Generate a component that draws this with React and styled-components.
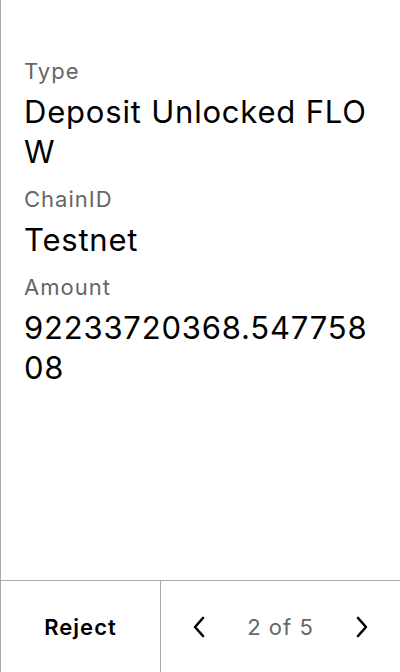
import React from "react";
import styled, { createGlobalStyle } from "styled-components";

const GlobalStyle = createGlobalStyle`
  html, body {
    margin: 0;
    padding: 0;
    background: #fff;
  }
  body {
    font-family: Inter, "Noto Sans", sans-serif;
  }
`;

const fields = [
  { label: "Type", value: "Deposit Unlocked FLOW" },
  { label: "ChainID", value: "Testnet" },
  { label: "Amount", value: "92233720368.54775808" },
];

function Chevron({ dir }) {
  const d = dir === "left" ? "M10 2 L2 11 L10 20" : "M2 2 L10 11 L2 20";
  return (
    <svg width="12" height="22" viewBox="0 0 12 22" fill="none">
      <path d={d} stroke="#000" strokeWidth="2.6" strokeLinecap="round" strokeLinejoin="round" />
    </svg>
  );
}

function App() {
  return (
    <>
      <GlobalStyle />
      <Screen>
        <Details>
          {fields.map((f) => (
            <Field key={f.label}>
              <Label>{f.label}</Label>
              <Value>{f.value}</Value>
            </Field>
          ))}
        </Details>
        <Footer>
          <RejectButton>Reject</RejectButton>
          <Pager>
            <NavButton aria-label="previous">
              <Chevron dir="left" />
            </NavButton>
            <PageText>2 of 5</PageText>
            <NavButton aria-label="next">
              <Chevron dir="right" />
            </NavButton>
          </Pager>
        </Footer>
      </Screen>
    </>
  );
}

export default App;

const Screen = styled.div`
  display: flex;
  flex-direction: column;
  height: 672px;
  width: 400px;
  box-sizing: border-box;
  border-left: 1px solid #aaa;
`;

const Details = styled.div`
  flex: 1;
  display: flex;
  flex-direction: column;
  gap: 13px;
  padding: 57px 23px 0 23px;
`;

const Field = styled.div`
  display: flex;
  flex-direction: column;
  gap: 7px;
`;

const Label = styled.div`
  font-size: 22px;
  line-height: 28px;
  letter-spacing: 1px;
  color: #666;
`;

const Value = styled.div`
  font-size: 31px;
  line-height: 40px;
  letter-spacing: 0.8px;
  color: #000;
  word-break: break-all;
`;

const Footer = styled.div`
  display: flex;
  height: 92px;
  box-sizing: border-box;
  border-top: 1px solid #aaa;
`;

const RejectButton = styled.div`
  width: 159px;
  display: flex;
  align-items: center;
  justify-content: center;
  font-size: 22px;
  font-weight: 600;
  letter-spacing: 1px;
  color: #000;
  border-right: 1px solid #aaa;
  cursor: pointer;
`;

const Pager = styled.div`
  flex: 1;
  display: flex;
  align-items: center;
  justify-content: space-between;
  padding: 0 32px;
`;

const NavButton = styled.div`
  display: flex;
  align-items: center;
  justify-content: center;
  width: 12px;
  cursor: pointer;
`;

const PageText = styled.div`
  font-size: 22px;
  letter-spacing: 1px;
  color: #666;
`;
